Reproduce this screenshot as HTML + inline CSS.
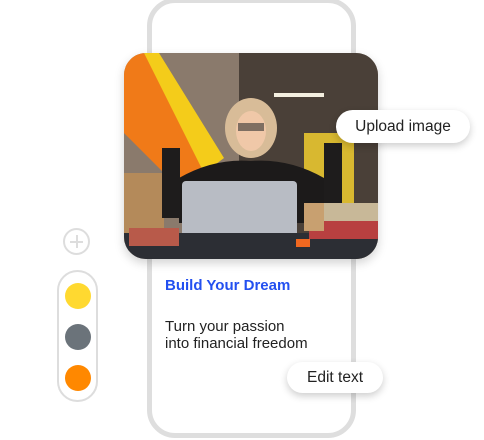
<!DOCTYPE html>
<html><head><meta charset="utf-8"><style>
*{margin:0;padding:0;box-sizing:border-box}
body{width:484px;height:440px;background:#fff;position:relative;overflow:hidden;font-family:"Liberation Sans",sans-serif}
.phone{position:absolute;left:147px;top:-2px;width:209px;height:440px;border:5px solid #dedede;border-radius:28px;background:#fff}
.card{position:absolute;left:124px;top:53px;width:254px;height:206px;border-radius:22px;overflow:hidden;box-shadow:0 4px 10px rgba(0,0,0,.18)}
.pill{position:absolute;background:#fff;border-radius:18px;box-shadow:0 3px 8px rgba(0,0,0,.2);font-size:15.5px;color:#222;display:flex;align-items:center;justify-content:center}
.h{position:absolute;left:165px;top:277px;font-weight:bold;font-size:15px;color:#2350f0}
.t{position:absolute;left:165px;top:318px;font-size:15px;line-height:17px;color:#222}
.plus{position:absolute;left:63px;top:228px;width:27px;height:27px;border:2px solid #ddd;border-radius:50%}
.plus:before,.plus:after{content:"";position:absolute;background:#ddd;left:5px;top:10.5px;width:13px;height:2px}
.plus:after{left:10.5px;top:5px;width:2px;height:13px}
.pal{position:absolute;left:57px;top:270px;width:41px;height:132px;border:2px solid #ddd;border-radius:21px}
.dot{position:absolute;left:6px;width:26px;height:26px;border-radius:50%}
</style></head><body>
<div class="phone"></div>
<div class="card">
<svg width="254" height="206" viewBox="0 0 254 206">
<rect width="254" height="206" fill="#8a7a6c"/>
<rect x="115" width="139" height="206" fill="#4a4038"/>
<polygon points="0,0 20,0 80,110 60,140 0,80" fill="#f07a18"/>
<polygon points="20,0 35,0 100,105 80,120" fill="#f4cc1a"/>
<rect x="0" y="120" width="40" height="70" fill="#b48a5a"/>
<rect x="180" y="80" width="50" height="80" fill="#d8b830"/>
<rect x="150" y="40" width="50" height="4" fill="#f4efe0"/>
<ellipse cx="127" cy="75" rx="26" ry="30" fill="#d8bc98"/>
<ellipse cx="127" cy="78" rx="15" ry="20" fill="#f0c8a8"/>
<rect x="114" y="70" width="26" height="8" fill="#333" opacity=".6"/>
<path d="M55 125 Q90 105 127 108 Q165 105 200 125 L200 170 L55 170Z" fill="#1c1a1a"/>
<rect x="38" y="95" width="18" height="70" fill="#1e1c1c"/>
<rect x="200" y="90" width="18" height="70" fill="#1e1c1c"/>
<rect x="58" y="128" width="115" height="70" rx="4" fill="#b8bcc4"/>
<rect x="0" y="180" width="254" height="26" fill="#2c2e34"/>
<rect x="5" y="175" width="50" height="18" fill="#b85a4a"/>
<rect x="195" y="150" width="59" height="20" fill="#c8b898"/>
<rect x="185" y="168" width="69" height="18" fill="#b84040"/>
<rect x="180" y="150" width="20" height="28" fill="#c8a070"/>
<rect x="172" y="186" width="14" height="8" fill="#f06820"/>
</svg></div>
<div class="pill" style="left:336px;top:110px;width:134px;height:33px">Upload image</div>
<div class="h">Build Your Dream</div>
<div class="t">Turn your passion<br>into financial freedom</div>
<div class="pill" style="left:287px;top:362px;width:96px;height:31px">Edit text</div>
<div class="plus"></div>
<div class="pal">
<div class="dot" style="top:11px;background:#ffd930"></div>
<div class="dot" style="top:52px;background:#6b737a"></div>
<div class="dot" style="top:93px;background:#ff8800"></div>
</div>
</body></html>
